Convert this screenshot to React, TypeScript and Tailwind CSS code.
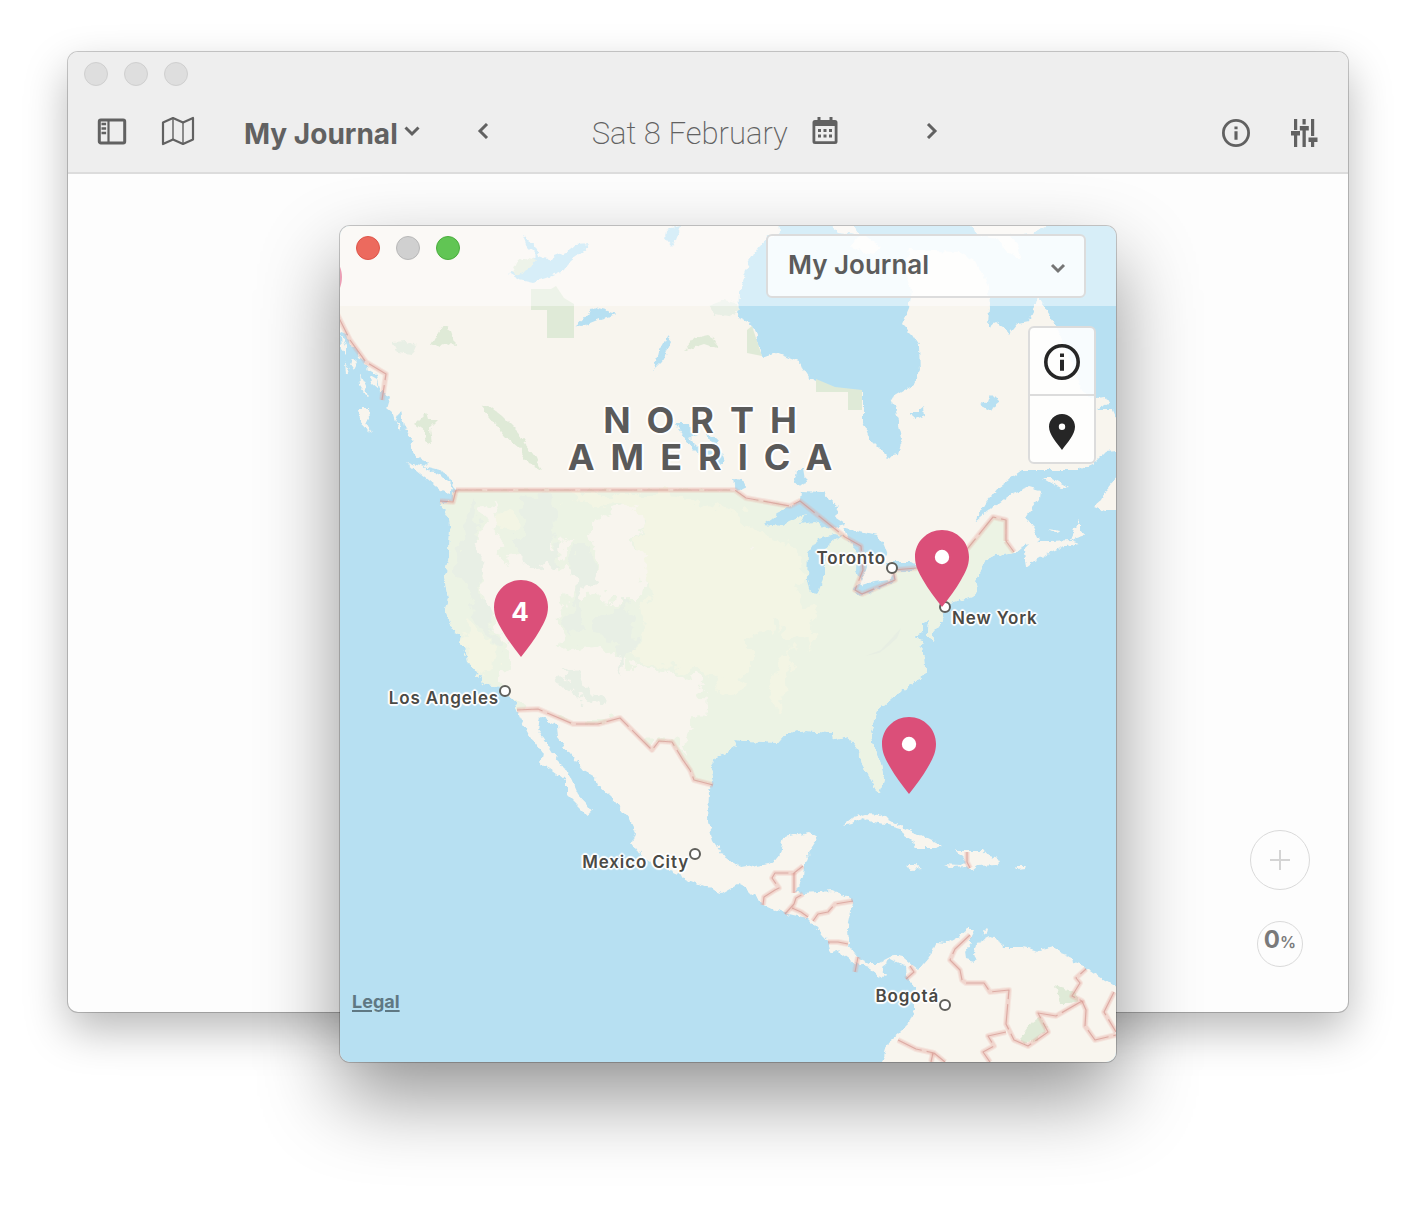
import React from "react";

const COAST_CANADA_WEST =
  "330,318 340,330 347,333 350,345 355,348 358,357 365,362 368,370 377,375 379,384 380,392 385,392 390,398 387,408 392,412 395,422 398,415 401,411 404,425 412,438 410,448 417,458 427,462 423,466 440,470 447,474 449,482 453,485 458,490";
const COAST_US_WEST =
  "459,497 460,508 463,514 464,490 456,490 453,494 453,502 440,502 448,520 450,530 449,557 444,577 448,597 445,610 452,627 463,642 468,660 482,677 483,684 500,687 507,695 515,703 517,710";
const COAST_MEXICO_WEST =
  "520,718 530,737 542,753 540,763 550,768 557,773 567,782 567,795 587,815 592,812 585,803 578,795 570,777 562,764 558,760 550,747 538,729 540,717 557,725 558,737 573,757 583,770 595,777 597,785 610,797 630,820 636,832 632,843 640,855 650,862 673,873 700,885 722,893 738,884 746,888 763,905 776,911 806,918 818,930 828,942 831,952 836,950 854,963 869,968 879,977 886,975 881,967 891,959 906,967 907,978 914,987 914,1010 908,1025 898,1035 888,1043 882,1062 880,1072";
const COAST_SOUTH_AMERICA =
  "1126,1072 1126,990 1116,987 1109,983 1099,977 1086,968 1074,963 1073,957 1059,952 1054,947 1039,951 1023,947 1003,947 999,939 989,937 983,940 976,944 974,953 976,959 973,961 966,959 965,952 971,944 971,935 974,929 968,929 959,937 948,943 936,942 929,957 918,970 909,963 903,958 893,956 879,963 869,963 859,958 849,945 848,927 853,903 846,896 833,891 803,893 796,892 803,877 804,865 809,858 808,852 818,837 809,832 784,837 779,857 769,863 741,868 733,862 727,860 713,840 708,822 709,790 713,785";
const COAST_US_EAST =
  "713,783 710,770 715,757 726,752 736,745 734,740 766,742 778,743 786,734 806,731 833,733 834,740 849,737 859,750 862,764 873,783 876,791 881,792 884,780 881,765 873,743 871,730 878,710 893,697 919,680 926,670 925,657 921,647 923,640 914,637 923,634 923,623 929,620 928,636 933,642 934,630 943,620 944,613 948,603 973,597 978,590 976,580 983,563 996,556 1014,553";
const COAST_CANADA_EAST =
  "1021,547 1030,545 1039,540 1033,527 1026,517 1032,508 1039,500 1040,490 1029,487 1013,493 989,510 974,523 986,503 999,487 1016,475 1023,470 1079,470 1096,462 1106,452 1116,451 1126,450 1126,417 1116,417 1113,410 1096,410 1109,403 1106,397 1096,398 1083,392 1070,360 1059,332 1054,323 1046,310 1038,296 1034,310 1028,322 1018,324 1009,335 1003,326 996,322 988,326 989,308 988,285 976,262 959,252 909,250 905,270 912,290 909,308 902,324 912,334 919,345 920,372 913,385 891,398 896,412 902,438 898,455 888,457 869,438 863,422 863,392 829,387 809,377 799,362 776,353 762,358 753,325 738,318 739,292 749,262 766,238 779,233 778,216 330,216";

const US_NORTH_BORDER =
  "1006,541 1006,520 993,517 968,548 917,568 893,570 895,580 862,594 855,590 863,570 861,546 845,537 800,501 790,506 746,498 735,490 456,490";
const US_SOUTH_BORDER =
  "517,710 538,709 573,724 598,724 620,718 652,750 659,741 672,742 683,760 690,770 694,780 713,785";

const ISLANDS = [
  "358,408 369,408 370,420 366,424 371,433 364,428 359,418",
  "406,462 424,467 440,475 452,487 450,494 440,490 425,478 415,470",
  "843,825 852,818 866,814 880,815 893,822 905,828 916,833 926,838 942,846 936,848 913,848 916,844 905,837 900,828 885,824 874,822 862,818 852,823",
  "905,866 915,866 921,869 912,870",
  "943,864 960,865 965,860 955,850 970,850 982,850 988,857 1000,861 998,864 978,865 972,870 966,866 950,867",
  "1015,866 1028,866 1026,869 1016,870",
  "1024,550 1033,541 1050,541 1072,540 1080,543 1062,547 1048,553 1034,561 1026,567",
  "1070,539 1075,527 1080,521 1080,532 1086,535 1074,539",
  "1048,529 1060,531 1058,534",
  "1043,478 1052,478 1068,487 1060,488",
  "1126,474 1116,478 1107,490 1102,500 1094,507 1104,511 1126,511",
  "846,216 860,234 850,248 872,255 880,248 866,236 838,233 830,226 832,216",
  "968,216 976,234 998,240 1008,252 1022,260 1018,245 1010,236 1030,234 1046,226 1046,216",
  "983,930 987,931 986,935 984,934",
  "341,335 346,345 346,355 342,350",
  "352,357 358,362 354,370 350,364",
  "359,373 366,388 368,398 360,386",
  "371,376 378,380 377,388 372,384",
  "345,362 349,372 346,374",
  "397,423 402,425 400,431",
];

const LAKES = [
  "523,236 532,242 539,255 550,259 565,253 575,245 590,244 583,252 572,260 562,272 546,279 533,283 520,280 508,273 520,270 530,262 537,257 527,247",
  "665,230 681,227 676,240 672,246 664,236",
  "575,327 583,320 594,307 606,310 617,314 600,319 590,323 580,328",
  "654,370 658,352 667,336 672,342 666,354 662,362",
  "674,424 688,424 697,435 690,438 704,452 712,447 706,432 716,438 726,462 718,466 706,462 694,450",
  "910,411 918,411 924,406 925,416 915,420",
  "980,402 988,403 991,394 999,402 994,406 990,412 983,408",
  "797,470 804,470 806,482 800,486 795,480",
  "735,479 742,480 745,487 737,491",
  "765,524 778,513 790,507 800,500 801,491 823,492 830,500 838,507 836,518 845,524 830,528 815,522 800,524 806,514 790,521 782,526",
  "808,552 817,538 836,534 842,536 826,548 824,560 824,580 818,595 810,594 807,580",
  "843,528 860,532 878,536 884,545 888,556 876,558 870,552 863,552 867,566 862,582 857,572 858,552 848,540",
  "853,587 868,582 890,579 894,573 896,581 880,588 866,595 857,596",
  "888,562 912,562 919,566 912,571 896,571 889,570",
];

const SURVEYED_PARKS = [
  "531,289 551,289 556,286 564,298 574,304 574,338 547,338 547,310 531,310",
  "747,330 752,326 762,356 747,353",
  "816,379 835,387 862,390 862,410 848,410 848,392 816,392",
];

const WILD_PARKS = [
  "431,345 438,332 442,325 450,330 455,345 445,343 437,347",
  "683,352 694,338 708,335 717,340 716,348 704,344 692,348",
  "481,406 488,405 502,416 518,432 527,446 536,458 541,471 528,463 519,448 505,436 494,422",
  "415,424 426,413 428,420 438,420 430,428 432,445 427,443 424,430",
  "1055,986 1075,992 1080,1000 1070,1004 1060,1004",
  "1020,1038 1032,1022 1040,1016 1048,1028 1036,1040 1024,1044",
];

const DRY_AREAS = [
  "490,502 498,510 500,525 495,535 498,550 510,560 525,555 548,562 560,570 568,560 576,575 568,590 560,610 562,640 560,655 520,650 500,640 494,620 484,600 480,575 475,550 480,540 484,520",
  "590,522 604,516 615,510 628,506 638,512 640,530 636,545 645,558 646,580 640,600 620,600 600,598 580,600 576,588 590,580 597,565 596,545 590,532",
  "510,650 540,640 560,650 600,645 616,662 640,668 670,672 700,680 707,690 700,700 698,720 690,735 683,755 672,742 659,741 652,750 620,718 598,724 573,724 538,709 520,709 508,694 500,686 505,665",
  "545,548 566,540 576,535 565,555",
  "749,546 755,547 756,551",
];

const PLAINS = [
  "565,494 600,494 660,494 680,496 735,510 746,520 770,540 790,548 800,560 804,580 800,600 818,612 815,640 800,645 770,625 750,640 750,680 730,690 700,672 640,664 630,655 650,610 645,570 640,550 640,520 625,505 590,506",
  "468,620 478,630 490,645 498,660 494,672 482,674 470,658 465,640",
  "500,510 515,512 518,525 505,530 497,520",
  "780,655 798,652 792,668 784,690 778,710 770,700 774,675",
];

const FOREST = [
  "472,500 480,515 476,540 484,565 478,590 490,610 492,628 502,645 494,648 480,620 470,590 458,570 462,540 468,515",
  "520,498 550,494 560,510 556,530 550,545 552,562 540,572 528,572 520,555 520,530 528,515",
  "576,545 590,545 592,560 600,580 590,590 580,585 574,610 582,630 572,640 564,620 572,590",
  "598,615 612,610 622,600 636,612 630,630 634,650 626,672 615,655 618,635 604,640 596,628",
  "562,674 574,672 580,684 592,690 606,695 610,704 596,700 584,696 576,702 566,690",
];

const MOOR = [
  "392,342 405,341 416,346 412,355 398,353",
  "711,305 724,300 736,303 740,310 728,317 714,315",
];

const LAND_BORDERS = [
  "336,312 350,340 366,362 386,374 382,400",
  "456,490 453,502 440,501",
  "763,905 764,897 775,890 779,888 772,878 775,873 794,873 803,866",
  "794,873 794,893",
  "785,914 794,904 796,898 803,894",
  "792,908 801,912 808,917",
  "813,921 818,914 828,912 835,904 853,901",
  "828,942 838,942 848,944",
  "858,957 855,972",
  "910,966 914,972 906,979",
  "967,852 967,862 970,868",
  "970,935 955,949 950,960 960,970 962,980 966,983 984,983 990,992 1009,990 1006,1024 1014,1040 1028,1046 1048,1032 1038,1013 1056,1016 1082,1001 1072,996 1080,983 1076,978 1086,969",
  "1082,1001 1086,1010 1085,1026 1095,1040 1116,1035",
  "1114,992 1104,1012 1116,1032",
  "898,1040 916,1049 934,1053 945,1062",
  "933,1053 931,1062",
  "1006,1032 988,1036 994,1046 983,1052 990,1062",
];

function GeoMap() {
  return (
    <svg
      viewBox="340 226 776 836"
      preserveAspectRatio="xMidYMid slice"
      className="block size-full"
      role="img"
      aria-label="Map of North America"
    >
      <defs>
        <filter id="shore" x="0" y="0" width="1416" height="1210" filterUnits="userSpaceOnUse" colorInterpolationFilters="sRGB">
          <feTurbulence type="fractalNoise" baseFrequency="0.13" numOctaves="3" seed="7" result="noise" />
          <feDisplacementMap in="SourceGraphic" in2="noise" scale="7" xChannelSelector="R" yChannelSelector="G" />
        </filter>
        <filter id="terrain" x="0" y="0" width="1416" height="1210" filterUnits="userSpaceOnUse" colorInterpolationFilters="sRGB">
          <feTurbulence type="fractalNoise" baseFrequency="0.06" numOctaves="4" seed="3" result="noise" />
          <feDisplacementMap in="SourceGraphic" in2="noise" scale="30" xChannelSelector="R" yChannelSelector="G" />
        </filter>
      </defs>
      <rect x="300" y="200" width="860" height="900" fill="#b7e0f2" />
      <g filter="url(#shore)">
        <polygon
          fill="#f8f5ee"
          points={[COAST_CANADA_WEST, COAST_US_WEST, COAST_MEXICO_WEST, COAST_SOUTH_AMERICA, COAST_US_EAST, COAST_CANADA_EAST].join(" ")}
        />
        {ISLANDS.map((p) => (
          <polygon key={p} points={p} fill="#f8f5ee" />
        ))}
        <polygon fill="#ecf3e4" points={[COAST_US_WEST, US_SOUTH_BORDER, COAST_US_EAST, US_NORTH_BORDER].join(" ")} />
      </g>
      <g filter="url(#terrain)">
        {PLAINS.map((p) => (
          <polygon key={p} points={p} fill="#f3f5e4" />
        ))}
        {DRY_AREAS.map((p) => (
          <polygon key={p} points={p} fill="#f8f5ee" />
        ))}
        {FOREST.map((p) => (
          <polygon key={p} points={p} fill="#e8efe5" />
        ))}
      </g>
      <path d="M865 656l16-6 12-13 8-9-4 10-10 9-8 6z" fill="#e7eee3" />
      {SURVEYED_PARKS.map((p) => (
        <polygon key={p} points={p} fill="#dfead7" />
      ))}
      <g filter="url(#shore)">
        {WILD_PARKS.map((p) => (
          <polygon key={p} points={p} fill="#dfead7" />
        ))}
        {MOOR.map((p) => (
          <polygon key={p} points={p} fill="#e8efe5" />
        ))}
        {LAKES.map((p) => (
          <polygon key={p} points={p} fill="#b7e0f2" />
        ))}
        <polygon points="512,272 518,260 526,257 537,260 530,268 516,276" fill="#dfead7" />
      </g>
      <g fill="none" strokeLinejoin="round">
        {[US_NORTH_BORDER, US_SOUTH_BORDER, "1006,541 1014,552", ...LAND_BORDERS].map((p) => (
          <React.Fragment key={p}>
            <polyline points={p} stroke="#e8a89d" strokeOpacity="0.18" strokeWidth="6" />
            <polyline points={p} stroke="#e8a89d" strokeOpacity="0.25" strokeWidth="4" />
            <polyline points={p} stroke="#d08f88" strokeOpacity="0.6" strokeWidth="1.2" strokeDasharray="26 5" />
          </React.Fragment>
        ))}
      </g>
    </svg>
  );
}

function InfoIcon({ className }: { className: string }) {
  return (
    <svg viewBox="0 0 36 36" className={className} aria-hidden="true">
      <circle cx="18" cy="18" r="16.2" fill="none" stroke="currentColor" strokeWidth="3.6" />
      <path d="M16 9.5h4v3.6h-4zM16 15.8h4v11h-4z" fill="currentColor" />
    </svg>
  );
}

function Chevron({ d, className }: { d: string; className: string }) {
  return (
    <svg viewBox="0 0 16 16" className={className} fill="none" stroke="currentColor" strokeWidth="3" aria-hidden="true">
      <path d={d} />
    </svg>
  );
}

const PIN_PATH = "M27 0C12 0 0 12 0 27C0 36 4 43 8 50C13 59 20 68 27 77C34 68 41 59 46 50C50 43 54 36 54 27C54 12 42 0 27 0Z";

function Pin({ className, label, count }: { className: string; label: string; count?: number }) {
  return (
    <button type="button" aria-label={label} className={`absolute h-[77px] w-[54px] ${className}`}>
      <svg viewBox="0 0 54 77" className="absolute inset-0 size-full" aria-hidden="true">
        <path d={PIN_PATH} fill="#db4f79" />
        {count === undefined && <circle cx="27" cy="27" r="7.2" fill="#fff" />}
      </svg>
      {count !== undefined && (
        <span className="absolute inset-x-0 top-4 pr-0.5 text-center text-[26px] leading-8 font-bold text-white">{count}</span>
      )}
    </button>
  );
}

const HALO =
  "[text-shadow:0_0_2px_#fff,2px_0_1px_#fff,-2px_0_1px_#fff,0_2px_1px_#fff,0_-2px_1px_#fff,1px_1px_1px_#fff,-1px_-1px_1px_#fff,1px_-1px_1px_#fff,-1px_1px_1px_#fff]";

function City({ name, dot, text }: { name: string; dot: string; text: string }) {
  return (
    <>
      <span className={`absolute size-3 rounded-full border-2 border-[#5f5f5b] bg-white ${dot}`} />
      <span className={`absolute text-[17px] leading-5 font-semibold tracking-wider whitespace-nowrap text-[#4a4a46] ${HALO} ${text}`}>{name}</span>
    </>
  );
}

function MapWindow() {
  return (
    <section
      aria-label="Map window"
      className="absolute top-[174px] left-[272px] h-[836px] w-[776px] overflow-hidden rounded-[10px] shadow-[0_0_0_1px_rgba(0,0,0,0.2),0_36px_80px_rgba(0,0,0,0.42)]"
    >
      <GeoMap />
      <Pin label="Entry in the west" className="top-6 -left-[52px]" />
      <h2
        className={`absolute top-[176px] left-[226px] w-[284px] text-center text-[36px] leading-[37px] font-bold tracking-[16px] text-[#5a5a5a] ${HALO}`}
      >
        NORTH AMERICA
      </h2>
      <City name="Toronto" dot="top-[336px] left-[546px]" text="top-[322px] right-[230px]" />
      <City name="New York" dot="top-[375px] left-[599px]" text="top-[382px] left-[612px]" />
      <City name="Los Angeles" dot="top-[459px] left-[159px]" text="top-[462px] right-[617px]" />
      <City name="Mexico City" dot="top-[622px] left-[349px]" text="top-[626px] right-[427px]" />
      <City name="Bogotá" dot="top-[773px] left-[599px]" text="top-[760px] right-[177px]" />
      <Pin label="4 entries near Las Vegas" count={4} className="top-[354px] left-[154px]" />
      <Pin label="Entry near New York" className="top-[304px] left-[575px]" />
      <Pin label="Entry near Florida" className="top-[491px] left-[542px]" />

      <header className="absolute inset-x-0 top-0 flex h-20 items-start justify-between bg-white/45 pt-2 pr-[30px] pl-4">
        <div className="flex gap-4 pt-0.5">
          <button type="button" aria-label="Close" className="size-6 rounded-full border border-[#de5549] bg-[#ec6a5e]" />
          <button type="button" aria-label="Minimize" className="size-6 rounded-full border border-[#b8b8b8] bg-[#d0d0d0]" />
          <button type="button" aria-label="Zoom" className="size-6 rounded-full border border-[#4aad3d] bg-[#61c554]" />
        </div>
        <div className="relative w-80">
          <select
            aria-label="Journal"
            className="h-16 w-full appearance-none rounded-md border-2 border-[#dcdcdc] bg-white/80 px-5 pb-1 text-[26px] font-semibold text-[#5c5c5c]"
          >
            <option>My Journal</option>
          </select>
          <Chevron d="M2 5l6 6 6-6" className="pointer-events-none absolute top-[26px] right-5 size-4 text-[#757575]" />
        </div>
      </header>

      <div className="absolute top-[100px] right-5 w-[68px] divide-y-2 divide-[#dcdcdc] overflow-hidden rounded-md border-2 border-[#dcdcdc] bg-white/90 text-[#262626]">
        <button type="button" aria-label="Info" className="flex h-[68px] w-full items-center justify-center pt-0.5">
          <InfoIcon className="size-9" />
        </button>
        <button type="button" aria-label="Show pins" className="flex h-[66px] w-full items-center justify-center pt-1.5">
          <svg viewBox="0 0 26 36" className="h-9 w-[26px]" fill="currentColor" aria-hidden="true">
            <path fillRule="evenodd" d="M13 0C5.8 0 0 5.8 0 12.8C0 21 8 29 13 36C18 29 26 21 26 12.8C26 5.8 20.2 0 13 0ZM13 9.6a3.2 3.2 0 1 1 0 6.4a3.2 3.2 0 1 1 0-6.4Z" />
          </svg>
        </button>
      </div>

      <a href="#legal" className="absolute bottom-12 left-3 text-[18px] leading-6 font-bold text-[#5f7883] underline decoration-2 underline-offset-2">
        Legal
      </a>
    </section>
  );
}

function Toolbar() {
  return (
    <header className="rounded-t-[10px] border-b-2 border-[#dcdcdc] bg-[#eee] pt-2.5 text-[#616161]">
      <div className="flex gap-4 pl-4">
        <span className="size-6 rounded-full border border-[#cfcfcf] bg-[#dedede]" />
        <span className="size-6 rounded-full border border-[#cfcfcf] bg-[#dedede]" />
        <span className="size-6 rounded-full border border-[#cfcfcf] bg-[#dedede]" />
      </div>
      <div className="flex h-[86px] items-center pt-1 pr-[30px] pl-[29px]">
        <button type="button" aria-label="Toggle sidebar">
          <svg viewBox="0 0 30 27" className="h-[27px] w-[30px]" aria-hidden="true">
            <rect x="2.300" y="2" width="25.400" height="23" rx="1.500" fill="none" stroke="currentColor" strokeWidth="3" />
            <path d="M11.500 2v23" stroke="currentColor" strokeWidth="2.200" />
            <path d="M4.500 6h4.600M4.500 10.500h4.600M4.500 15h4.600" stroke="currentColor" strokeWidth="2.600" />
          </svg>
        </button>
        <button type="button" aria-label="Open map" className="ml-[34px]">
          <svg viewBox="0 0 34 30" className="h-[30px] w-[34px]" fill="none" stroke="currentColor" aria-hidden="true">
            <path d="M2 6.500L12 2l10 4.500L32 2v21.500L22 28l-10-4.500L2 28z" strokeWidth="2.200" strokeLinejoin="round" />
            <path d="M12 2v21.500M22 6.500V28" strokeWidth="1.400" />
          </svg>
        </button>
        <button type="button" className="ml-[49px] flex items-center gap-1.5 pt-1.5 text-[28px] leading-9 font-bold whitespace-nowrap">
          My Journal
          <Chevron d="M1.500 4.500L8 11l6.500-6.500" className="mb-1.5 size-4" />
        </button>
        <button type="button" aria-label="Previous day" className="ml-[55px]">
          <Chevron d="M12 1L5 8l7 7" className="size-4" />
        </button>
        <div className="ml-[101px] flex items-center gap-6">
          <time dateTime="02-08" className="pt-1.5 font-['Roboto'] text-[31px] leading-9 font-extralight whitespace-nowrap">
            Sat 8 February
          </time>
          <button type="button" aria-label="Choose date">
            <svg viewBox="0 0 26 28" className="h-7 w-[26px]" fill="currentColor" aria-hidden="true">
              <path
                fillRule="evenodd"
                d="M5.500 0h3v3h9V0h3v3H23a2.500 2.500 0 0 1 2.500 2.500v19A2.500 2.500 0 0 1 23 27H3A2.500 2.500 0 0 1 .5 24.500v-19A2.500 2.500 0 0 1 3 3h2.500zM3.300 9v15.200h19.400V9z"
              />
              <path d="M6 12h3v3H6zM11.500 12h3v3h-3zM17 12h3v3h-3zM6 17.500h3v3H6zM11.500 17.500h3v3h-3zM17 17.500h3v3h-3z" />
            </svg>
          </button>
        </div>
        <button type="button" aria-label="Next day" className="ml-[86px]">
          <Chevron d="M4 1l7 7-7 7" className="size-4" />
        </button>
        <div className="ml-auto flex items-center gap-[41px] pt-1">
          <button type="button" aria-label="Info">
            <InfoIcon className="size-7" />
          </button>
          <button type="button" aria-label="Settings">
            <svg viewBox="0 0 27 28" className="h-7 w-[27px]" fill="currentColor" aria-hidden="true">
              <path d="M3 0h3.200v11H3zM0 12h9v4.500H6.200V28H3V16.500H0zM11.500 0h3.200v5.500h-3.200zM8.800 7h9v4.500h-3V28h-3.300V11.500H8.800zM20 0h3.200v17H20zM17.500 18.500H26.500V23h-3.300v5H20v-5h-2.500z" />
            </svg>
          </button>
        </div>
      </div>
    </header>
  );
}

export default function App() {
  return (
    <main className="min-h-screen bg-white px-[68px] pt-[52px] pb-[198px] font-['Inter',sans-serif]">
      <div className="relative flex min-h-[960px] flex-col rounded-[10px] bg-[#fdfdfd] shadow-[0_0_0_1px_rgba(0,0,0,0.2),0_18px_44px_rgba(0,0,0,0.28)]">
        <Toolbar />
        <div className="flex flex-1 flex-col items-end justify-end pb-[45px]">
          <button type="button" aria-label="Add entry" className="mr-[38px] flex size-[60px] items-center justify-center rounded-full border border-[#dadada] text-[#d4d4d4]">
            <svg viewBox="0 0 20 20" className="size-5" stroke="currentColor" strokeWidth="2" aria-hidden="true">
              <path d="M10 0v20M0 10h20" />
            </svg>
          </button>
          <div className="mt-[31px] mr-[45px] flex size-[46px] items-baseline justify-center rounded-full border border-[#dadada] pt-1 text-[#7a7a7a]">
            <span className="text-[24px] leading-7 font-bold">0</span>
            <span className="text-[16px] leading-7 font-semibold">%</span>
          </div>
        </div>
        <MapWindow />
      </div>
    </main>
  );
}
